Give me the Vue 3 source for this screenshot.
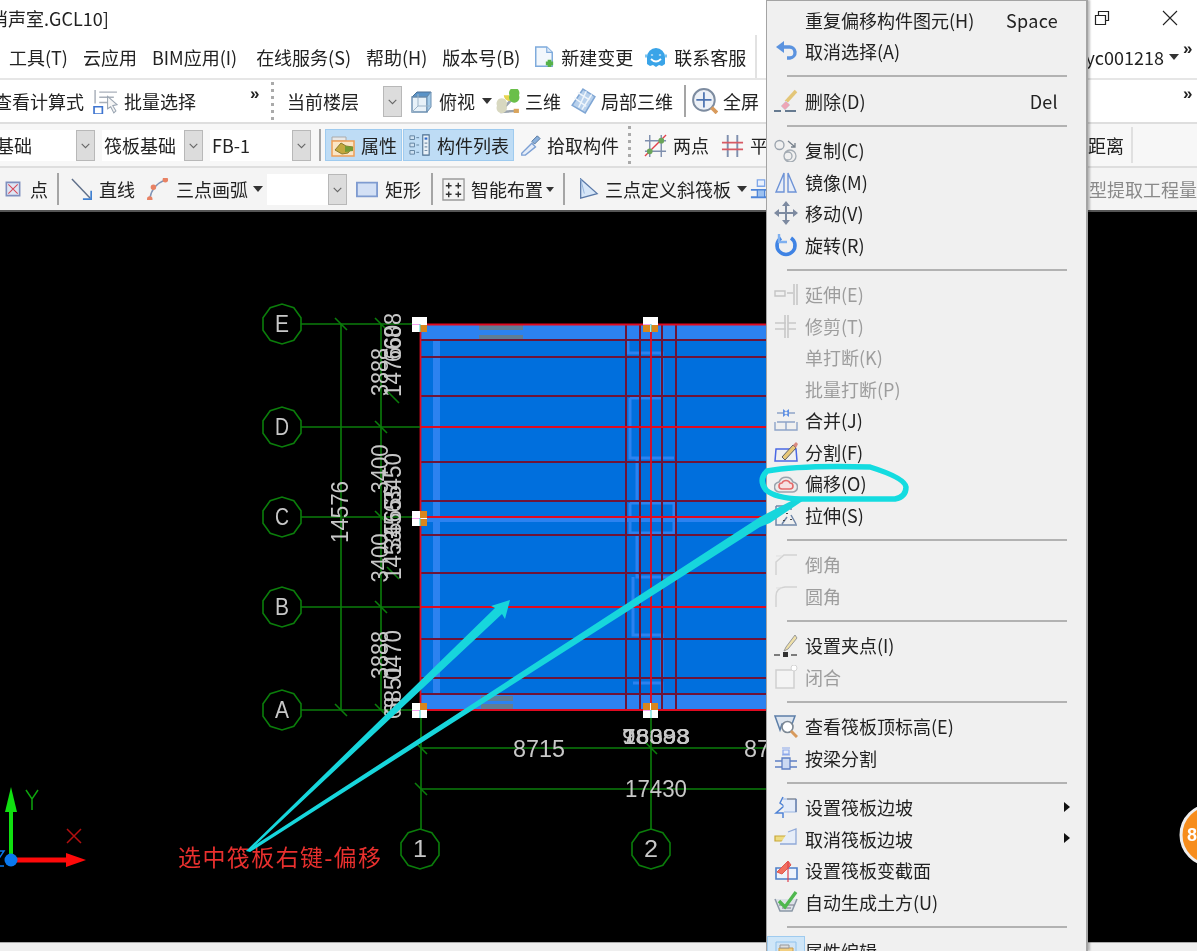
<template>
  <div class="screen">
    <!-- 标题栏 -->
    <div class="titlebar">
      <span class="title">消声室.GCL10]</span>
      <div class="winbtns">
        <svg width="16" height="16" viewBox="0 0 16 16"><path d="M1.5 5.5h10v9h-10zM4.5 5.5v-4h10v9h-3" fill="none" stroke="#222" stroke-width="1.2"/></svg>
        <svg class="ml52" width="16" height="16" viewBox="0 0 16 16"><path d="M1 1l14 14M15 1L1 15" stroke="#222" stroke-width="1.1"/></svg>
      </div>
    </div>

    <!-- 菜单行 -->
    <div class="row bar1">
      <div class="group menubar">
        <span>工具(T)</span><span>云应用</span><span>BIM应用(I)</span><span class="ml4">在线服务(S)</span><span>帮助(H)</span><span>版本号(B)</span>
        <span class="tool ml-2"><Ico n="newdoc" :w="22" :h="26" />新建变更</span>
        <span class="tool ml-4"><Ico n="smile" />联系客服</span>
      </div>
      <div class="group user">
        <span>yc001218</span><i class="caret ml5"></i><b class="more ml4 up">»</b>
      </div>
    </div>

    <div class="row bar2">
      <div class="group">
        <span class="ml-6">查看计算式</span>
        <span class="tool ml9"><Ico n="batch" :w="25" />批量选择</span>
        <b class="more ml54 up">»</b>
        <i class="grip ml7"></i>
        <div class="sel ml9 w119"><span>当前楼层</span><i class="btn"><Ico n="chev" :w="13" /></i></div>
        <span class="tool ml7"><Ico n="cube" />俯视</span>
        <i class="caret ml7"></i>
        <span class="tool ml4 g4"><Ico n="three" :w="25" />三维</span>
        <span class="tool ml9 g5"><Ico n="local" :w="26" />局部三维</span>
        <i class="vsep ml11"></i>
        <span class="tool ml6 g5"><Ico n="zoomall" :w="26" />全屏</span>
      </div>
      <div class="group"><b class="more up">»</b></div>
    </div>

    <div class="row bar3">
      <div class="group">
        <div class="sel ml-8 w103"><span>基础</span><i class="btn"><Ico n="chev" :w="13" /></i></div>
        <div class="sel ml7 w101 tight"><span>筏板基础</span><i class="btn"><Ico n="chev" :w="13" /></i></div>
        <div class="sel ml7 w101 tight"><span>FB-1</span><i class="btn"><Ico n="chev" :w="13" /></i></div>
        <i class="vsep ml8"></i>
        <span class="tool active ml4 a77"><Ico n="props" />属性</span>
        <span class="tool active ml1 a111"><Ico n="list" :w="22" />构件列表</span>
        <span class="tool ml5"><Ico n="dropper" :w="22" />拾取构件</span>
        <i class="grip ml9"></i>
        <span class="tool ml13"><Ico n="twopt" :w="23" />两点</span>
        <span class="tool ml12"><Ico n="para" :w="23" />平行</span>
      </div>
      <div class="group"><span class="dist">距离</span></div>
    </div>

    <div class="row bar4">
      <div class="group">
        <span class="tool ml5 g9"><Ico n="pointbox" :w="16" />点</span>
        <i class="vsep ml9"></i>
        <span class="tool ml12"><Ico n="line" :w="22" />直线</span>
        <span class="tool ml12 g7"><Ico n="arc" :w="22" />三点画弧</span>
        <i class="caret ml5"></i>
        <div class="sel ml4 w80"><span></span><i class="btn"><Ico n="chev" :w="13" /></i></div>
        <span class="tool ml9 g7"><Ico n="rect" :w="22" />矩形</span>
        <i class="vsep ml10"></i>
        <span class="tool ml9"><Ico n="smart" :w="23" />智能布置</span>
        <i class="caret small ml3"></i>
        <i class="vsep ml9"></i>
        <span class="tool ml12"><Ico n="slope" :w="22" />三点定义斜筏板</span>
        <i class="caret ml6"></i>
        <Ico class="ml3" n="beam" :w="22" />
      </div>
      <div class="group faded"><span>型提取工程量</span></div>
    </div>

    <!-- 绘图区 -->
    <div class="canvas">
      <svg class="cad" width="1197" height="730" viewBox="0 212 1197 730">
        <rect x="420" y="324" width="360" height="386" fill="#006fdd" />
        <!-- 边缘的浅色带 -->
        <g fill="#2c82f0">
          <rect x="421" y="325" width="359" height="15" />
          <rect x="421" y="695" width="359" height="15" />
          <rect x="433" y="340" width="7" height="355" />
          <rect x="421" y="517" width="359" height="5" />
        </g>
        <path d="M628 340V353H662V397M630 398H662M630 398V458H674M637 458V503M630 503H674V533H630V503M637 535V577H676M633 577V635H662V677M633 683H662V695" fill="none" stroke="#2c82f0" stroke-width="3" />
        <g fill="#5f7d96">
          <rect x="479" y="325" width="44" height="5" />
          <rect x="479" y="335" width="44" height="5" />
          <rect x="481" y="696" width="32" height="5" />
          <rect x="481" y="704" width="32" height="6" />
        </g>
        <g stroke="#6e1438" stroke-width="2">
          <path v-for="y in darkRows" :key="y" :d="`M421 ${y}H780`" />
          <path v-for="x in darkCols" :key="x" :d="`M${x} 325V710`" />
        </g>
        <g stroke="#e00a20" stroke-width="1.800" fill="none">
          <path d="M420.500 324.500H780M420.500 710H780M420.500 324V710M651 325V710" />
          <path d="M421 427H780M421 517H780M421 607H780" />
        </g>

        <!-- 轴网 -->
        <g stroke="#0b7d0b" stroke-width="1.6" fill="none">
          <path v-for="a in rowAxes" :key="a.t" :d="`M301 ${a.y}H420`" />
          <path d="M341 324V710M381 324V710M421 717V830M651 717V830M421 748H780M421 789H780" />
          <path v-for="t in ticks" :key="t.join()" :d="`M${t[0] - 6} ${t[1] - 6}l12 12`" />
          <polygon v-for="b in bubbles" :key="b.t" :points="b.points" />
        </g>
        <text v-for="b in bubbles" :key="b.t" class="cadtext" :x="b.x" :y="b.y + 8" font-size="23" text-anchor="middle" textLength="14" lengthAdjust="spacingAndGlyphs">{{ b.t }}</text>
        <text v-for="d in vertDims" :key="d.t + d.y" class="cadtext" :transform="`rotate(-90 ${d.x} ${d.y})`" :x="d.x" :y="d.y + 8" text-anchor="middle" font-size="23" :textLength="d.len" lengthAdjust="spacingAndGlyphs">{{ d.t }}</text>
        <text v-for="d in horizDims" :key="d.t + d.x" class="cadtext" :x="d.x" :y="d.y + 8" text-anchor="middle" :font-size="d.size" :textLength="d.len" lengthAdjust="spacingAndGlyphs">{{ d.t }}</text>

        <!-- 夹点 -->
        <g v-for="g in grips" :key="g.x + '-' + g.y" :transform="`translate(${g.x - 8} ${g.y - 7})`">
          <rect width="15" height="15" fill="#fff" />
          <rect v-for="(q, i) in g.orange" :key="i" :x="q[0]" :y="q[1]" :width="q[2]" :height="q[3]" fill="#d9861c" />
          <path d="M0 7.500H8" stroke="#f7a0f0" />
          <path d="M8 7V15" stroke="#45d8d0" />
        </g>

        <!-- 坐标系 -->
        <path d="M11 860V805" stroke="#10e010" stroke-width="4" />
        <path d="M11 787l-6 25h12z" fill="#10e010" />
        <path d="M11 860H66" stroke="#ff0a0a" stroke-width="5" />
        <path d="M86 860l-20-7v14z" fill="#ff0a0a" />
        <circle cx="11" cy="860" r="6.500" fill="#0a78ee" />
        <path d="M26 790l6 9 6-9M32 799v11" fill="none" stroke="#0ea50e" stroke-width="1.500" />
        <path d="M67 829l14 14M81 829l-14 14" stroke="#b21010" stroke-width="1.500" />
        <path d="M-6 851H4L-6 866H4" fill="none" stroke="#0a78ee" stroke-width="1.500" />

        <text class="note" x="178" y="866" textLength="203" lengthAdjust="spacing">选中筏板右键-偏移</text>

        <circle cx="1211" cy="835" r="30" fill="#f78d1c" stroke="#eee" stroke-width="3" />
        <text x="1187" y="841" fill="#fff" font-size="18" font-weight="700" font-family="Liberation Sans, sans-serif">8</text>
      </svg>
    </div>
    <div class="statusbar"></div>

    <!-- 右键菜单 -->
    <div class="ctx">
      <template v-for="(m, i) in menu" :key="i">
        <div v-if="m.sep" class="ctxsep"><i></i></div>
        <div v-else class="ctxitem" :class="{ off: m.off }">
          <span class="ctxicon" :class="{ on: m.on }"><Ico v-if="m.icon" :n="m.icon" /></span>
          <span class="ctxtext">{{ m.t }}</span>
          <span v-if="m.k" class="ctxkey">{{ m.k }}</span>
          <i v-if="m.sub" class="ctxsub"></i>
        </div>
      </template>
    </div>

    <!-- 手绘标注 -->
    <svg class="marks" width="1197" height="951" viewBox="0 0 1197 951">
      <path d="M246 851L495 608L491 606L510 600L505 619L502 614L249 851Z" fill="#17d6dc" />
      <path d="M246 851L760 517L793 500L804 500L770 523L760 527L250 852Z" fill="#17d6dc" />
      <path d="M767 471Q800 465 870 467Q905 478 906 487Q906 497 895 499L800 499Q775 498 766 490Q758 480 767 471Z" fill="none" stroke="#14dce0" stroke-width="5.500" />
    </svg>
  </div>
</template>

<script setup>
import { h } from 'vue'

// 每个图标: [d, stroke, fill, width]
const icons = {
  chev: [['M5 9l7 7 7-7', '#666', '', 2]],
  undo: [['M7 8h8a5.500 5.500 0 0 1 1 11h-3', '#5b93df', '', 3.4], ['M10 2L2 8l8 6z', '', '#5b93df']],
  brush: [['M22 2L12 13', '#e3c678', '', 3.5], ['M12 12l-5 5 4 4 5-5z', '#d8d0d8', '#eda6b6', 1], ['M0 22h7M11 22h11', '#667a90', '', 1.8]],
  copy: [['M10 7a4.500 4.500 0 1 1-9 0a4.500 4.500 0 1 1 9 0', '#9aa3ad', '', 1.3], ['M14 3l7 6M21 5v4h-4', '#77818c', '', 1.3], ['M22 18a6 6 0 1 1-12 0a6 6 0 1 1 12 0M18 18a4 4 0 1 1-8 0a4 4 0 1 1 8 0', '#a3abb3', '', 1.3]],
  mirror: [['M10 3L2 22h8zM14 3l8 19h-8z', '#6e93d6', '#e8eef8', 1.4]],
  move: [['M12 2v20M2 12h20', '#7d8aa0', '', 2], ['M12 0l-4 5h8zM12 24l-4-5h8zM0 12l5-4v8zM24 12l-5-4v8z', '', '#7d8aa0']],
  rotate: [['M7 5a9 9 0 1 0 10 0', '#3f83e4', '', 3.6], ['M5 1v8h8', '#7fb0ef', '', 2.4]],
  extend: [['M1 9h10v5H1zM13 11h6', '#c4c4c4', '', 1.4], ['M20 2v21M23 2v21', '#c4c4c4', '', 1.5]],
  trim: [['M1 9h11M1 15h11M14 9h8M14 15h8', '#c8c8c8', '', 1.6], ['M11 1v23M14 1v23', '#c8c8c8', '', 1.6]],
  merge: [['M3 5h7M21 5h-7M3 14h18M1 14v8h22v-8M12 14v8M1 22h22', '#8ea4c8', '', 1.4], ['M9 1l5 4-5 4zM15 1l-5 4 5 4z', '', '#5f90e4']],
  split: [['M2 9h20l1 12H1z', '#4a68e4', '', 1.5], ['M8 17L19 5l3 3-11 12z', '#5c6066', '#e8c878', 1], ['M19 5l3-3 2 2-2 4z', '', '#d88a80']],
  offset: [['M6 21a5 5 0 0 1-1-10 7.500 7.500 0 0 1 14 0 5 5 0 0 1-1 10z', '#9aa3ad', '#ececec', 1.6], ['M8 18a3 3 0 0 1 0-6 4.500 4.500 0 0 1 8 0 3 3 0 0 1 0 6z', '#e36a6a', '#f6e2e2', 1.6]],
  stretch: [['M2 3h15v4M2 3v19h21M17 12l5 9M8 21l5-7', '#6f86a8', '', 1.5], ['M13 10v1M17 16v1M10 17v1', '#444', '', 2]],
  chamfer: [['M2 23V10l8-7h13', '#d2d2d2', '', 1.5], ['M2 4h6', '#dfdfdf', '', 1]],
  fillet: [['M2 23V12q0-8 9-9h12', '#d2d2d2', '', 1.5], ['M2 4h6', '#dfdfdf', '', 1]],
  grip: [['M21 2L12 14l-2 4 4-2L23 5z', '#999', '#efe0a8', 1], ['M0 22h6M17 22h6', '#555', '', 1.6], ['M9 19h5v5H9z', '', '#333']],
  closed: [['M2 5h18v18H2z', '#cfcfcf', '#f4f4f4', 1.5], ['M23 3a3 3 0 1 1-6 0a3 3 0 1 1 6 0', '#d4d4d4', '#fff', 1]],
  viewtop: [['M1 2h20l-3 8H8l-2 6z', '#5c7ea8', '#dde5ef', 1.5], ['M19 13a5.500 5.500 0 1 1-11 0a5.500 5.500 0 1 1 11 0', '#7c8894', '#fff', 1.6], ['M17 17l6 6', '#d89a5c', '', 3]],
  beamsplit: [['M8 2h8M8 9h8M9 4h6v4H9z', '#8ca8ea', '#e6ecfa', 1.2], ['M1 15h22M1 21h22', '#5d7fc4', '', 1.5], ['M8 12h8v11H8z', '#5d7fc4', '#cbd9f2', 1.3]],
  slopeset: [['M9 2l-3 6 4 3-8 7h7v5', '#4f83d6', '', 1.5], ['M9 4h13v13H10', '#9ab6e4', '#e3ebf8', 1.2], ['M13 4h9v13', '#777', '', 1], ['M22 4v13', '#6488c8', '', 1]],
  slopeoff: [['M1 9h13v5H1z', '#c8a838', '#eedc82', 1.2], ['M14 5l8-3v15H6', '#90a9d8', '#e6edf8', 1.3]],
  section: [['M2 10h21v11H2z', '#4f7fc8', '#eef3fb', 1.6], ['M3 14L14 3l3 4L8 16z', '#e0564c', '#f0705f', 1], ['M14 4v20', '#e04050', '', 1.2]],
  soil: [['M1 9l5 12h12l5-12', '#8b98a6', '#dde2e8', 1.5], ['M5 15h15M8 18h9', '#778', '', 1.2], ['M5 11l6 6L22 2', '#4fb84f', '', 3.4]],
  propsbox: [['M2 3h20v20H2z', '#8fc2ec', '#cfe4f6', 1], ['M5 9h14v11H5z', '#c89a4c', '#f2cf80', 1], ['M6 6h9v3H6z', '#999', '#ddd', 1]],
  newdoc: [['M3 1h12l6 6v15H3z', '#7eaadc', '#f2f7fc', 1.6], ['M15 1v6h6', '#7eaadc', '#dce9f7', 1.2], ['M14 19h8M18 15v8', '#55b24a', '', 4]],
  smile: [['M3 12a9 9 0 1 1 18 0v7l-3 2-3-1-3 2-3-2-3 1-3-2z', '', '#3aa4e8'], ['M8 9.500v1M16 9.500v1', '#fff', '', 2.2], ['M7 14q5 5 10 0', '#fff', '', 1.8], ['M1 11h2M21 11h2', '#7cc4ef', '', 3]],
  batch: [['M2 1v13M6 3h17M6 8h14M6 13h8', '#a9b0ba', '', 1.4], ['M1 17h8v7H1z', '#3d74d0', '', 1.6], ['M14 7l9 8-4 1 3 5-2 2-3-6-3 2z', '#9aa5b2', '#f6f6f6', 1]],
  cube: [['M3 8l5-5h14l-4 5z', '#4a6f94', '#5a93c7', 1], ['M3 8h15v15H3z', '#6b8eb0', '#e8f1f8', 1.4], ['M18 8l4-5v15l-4 5z', '#6b8eb0', '#a4cbe9', 1], ['M3 23l6-6h13M9 17V5', '#9db4c8', '', 1]],
  three: [['M4 22L17 8M4 22l16-1', '#9aa3ad', '', 2.4], ['M18 6a5 5 0 1 1-10 0', '#e4d254', '#e8d64e', 1], ['M22 6a5 5 0 1 1-9 0a5 5 0 1 1 9 0', '', '#6abf4a'], ['M10 16a5 5 0 1 1-9 0a5 5 0 1 1 9 0', '', '#d8d8c0'], ['M22 19h-5v4h5z', '', '#d9a45c']],
  local: [['M12 1l11 7-9 15L2 16z', '#7fa6d4', '#b7d0ec', 1.4], ['M7 4l11 7M4 9l11 8M15 3l-7 15M20 6L11 20', '#eff5fb', '', 1.4]],
  zoomall: [['M21 11a10 10 0 1 1-20 0a10 10 0 1 1 20 0', '#7d8ca0', '#edf1f7', 1.8], ['M11 4v14M4 11h14', '#4d73b0', '', 1.6], ['M18 18l5 5', '#d89a5c', '', 3.5]],
  props: [['M1 4h14v4H1z', '#aaa', '#e8e8e8', 1], ['M1 8h22v15H1z', '#ef9f55', '#fbe5c4', 1.5], ['M4 17l6-7 5 3 7 1-5 6-6 1z', '#8a7c2e', '#c4a83e', 1], ['M14 13l8 1v4l-8 1z', '', '#749a34']],
  list: [['M1 2h5v4H1zM1 10h5v4H1zM1 18h5v4H1z', '#5f7f9c', '#cfe2f3', 1], ['M8 4h3M8 12h3M8 20h3', '#5f7f9c', '', 1], ['M15 1h7v22h-7z', '#4c6f90', '#e9f1f8', 1.2], ['M17 5h3', '#2e68c8', '', 2.4], ['M17 10h3M17 14h3M17 18h3', '#7a93ac', '', 1.2]],
  dropper: [['M3 21l11-11 4 4L7 23H3z', '#7da0d4', '#e5edf8', 1.5], ['M14 8l6-6 3 3-6 6z', '#4c6f98', '#8ab0dc', 1]],
  twopt: [['M6 1v23M18 1v23M1 7h22M1 18h22', '#7f8fae', '', 1.5], ['M1 23L23 1', '#e2404a', '', 1.4], ['M9 18a3 3 0 1 1-6 0a3 3 0 1 1 6 0M21 7a3 3 0 1 1-6 0a3 3 0 1 1 6 0', '', '#6aa55a']],
  para: [['M7 1v23M17 1v23', '#7f8fae', '', 2], ['M1 9h22M1 16h22', '#d75a64', '', 1.8]],
  pointbox: [['M2 2h20v20H2z', '#7f8fbe', '#dfe6f4', 2.4], ['M5 5l14 14M19 5L5 19', '#d84a5a', '', 1.6]],
  line: [['M1 1l20 21', '#60708a', '', 1.6], ['M22 14v9h-9', '#3f7fd0', '', 1.8]],
  arc: [['M3 23Q5 8 20 2', '#7f93b5', '', 1.6], ['M6 23a3 3 0 1 1-6 0a3 3 0 1 1 6 0M10 10a3 3 0 1 1-6 0a3 3 0 1 1 6 0M23 2a3 3 0 1 1-6 0a3 3 0 1 1 6 0', '', '#e88264']],
  rect: [['M1 5h22v15H1z', '#7f9bd0', '#d3e0f5', 2]],
  smart: [['M1 1h22v22H1z', '#9a9a9a', '#f4f4f4', 1.4], ['M7 5v6M4 8h6M17 5v6M14 8h6M7 14v6M4 17h6M17 14v6M14 17h6', '#333', '', 1.5]],
  slope: [['M4 1v21l18-5z', '#5a79a8', '#d6e6f8', 1.4], ['M4 1l4 16', '#93b4dc', '', 1]],
  beam: [['M8 2h8v7H8z', '#7da5e8', '#e9f0fc', 1.4], ['M1 13h22M1 21h22', '#4f85d8', '', 2], ['M8 13h8v8H8z', '#4f85d8', '#9dc1ef', 1.4]]
}

const Ico = (props) =>
  h('svg', { width: props.w || 24, height: props.h || props.w || 24, viewBox: '0 0 24 24', style: 'flex:none;display:block' },
    (icons[props.n] || []).map(([d, s, f, w]) => h('path', { d, stroke: s || 'none', fill: f || 'none', 'stroke-width': w || 1 })))
Ico.props = ['n', 'w', 'h']

const menu = [
  { t: '重复偏移构件图元(H)', k: 'Space' },
  { icon: 'undo', t: '取消选择(A)' },
  { sep: true },
  { icon: 'brush', t: '删除(D)', k: 'Del' },
  { sep: true },
  { icon: 'copy', t: '复制(C)' },
  { icon: 'mirror', t: '镜像(M)' },
  { icon: 'move', t: '移动(V)' },
  { icon: 'rotate', t: '旋转(R)' },
  { sep: true },
  { icon: 'extend', t: '延伸(E)', off: true },
  { icon: 'trim', t: '修剪(T)', off: true },
  { t: '单打断(K)', off: true },
  { t: '批量打断(P)', off: true },
  { icon: 'merge', t: '合并(J)' },
  { icon: 'split', t: '分割(F)' },
  { icon: 'offset', t: '偏移(O)' },
  { icon: 'stretch', t: '拉伸(S)' },
  { sep: true },
  { icon: 'chamfer', t: '倒角', off: true },
  { icon: 'fillet', t: '圆角', off: true },
  { sep: true },
  { icon: 'grip', t: '设置夹点(I)' },
  { icon: 'closed', t: '闭合', off: true },
  { sep: true },
  { icon: 'viewtop', t: '查看筏板顶标高(E)' },
  { icon: 'beamsplit', t: '按梁分割' },
  { sep: true },
  { icon: 'slopeset', t: '设置筏板边坡', sub: true },
  { icon: 'slopeoff', t: '取消筏板边坡', sub: true },
  { icon: 'section', t: '设置筏板变截面' },
  { icon: 'soil', t: '自动生成土方(U)' },
  { sep: true },
  { icon: 'propsbox', t: '属性编辑', on: true }
]

// 筏板上的钢筋线
const darkRows = [340, 357, 396, 462, 501, 535, 573, 639, 678, 694]
const darkCols = [626, 640, 662, 676]

const rowAxes = [
  { t: 'E', y: 324 },
  { t: 'D', y: 427 },
  { t: 'C', y: 517 },
  { t: 'B', y: 607 },
  { t: 'A', y: 710 }
]

function polygonAround(x, y, r) {
  const pts = []
  for (let i = 0; i < 10; i++) {
    const a = (Math.PI * 2 * i) / 10 + Math.PI / 10
    pts.push(`${(x + r * Math.cos(a)).toFixed(1)},${(y + r * Math.sin(a)).toFixed(1)}`)
  }
  return pts.join(' ')
}

const bubbles = [
  ...rowAxes.map((a) => ({ t: a.t, x: 282, y: a.y, points: polygonAround(282, a.y, 20) })),
  { t: '1', x: 420, y: 849, points: polygonAround(420, 849, 20) },
  { t: '2', x: 651, y: 849, points: polygonAround(651, 849, 20) }
]

const ticks = [
  [341, 324], [381, 324], [381, 427], [381, 517], [381, 607], [381, 710], [341, 710],
  [393, 397], [393, 573], [421, 748], [651, 748], [421, 789]
]

const vertDims = [
  { t: '14576', x: 340, y: 512, len: 62 },
  { t: '3888', x: 380, y: 372, len: 48 },
  { t: '3400', x: 380, y: 469, len: 49 },
  { t: '3400', x: 380, y: 558, len: 49 },
  { t: '3888', x: 380, y: 655, len: 48 },
  { t: '608', x: 393, y: 331, len: 36 },
  { t: '668', x: 393, y: 344, len: 36 },
  { t: '1476', x: 393, y: 372, len: 50 },
  { t: '3450', x: 393, y: 478, len: 50 },
  { t: '5655', x: 393, y: 510, len: 50 },
  { t: '3456', x: 393, y: 525, len: 50 },
  { t: '1453', x: 393, y: 555, len: 50 },
  { t: '0470', x: 393, y: 655, len: 50 },
  { t: '6851', x: 393, y: 690, len: 50 },
  { t: '68', x: 393, y: 708, len: 22 }
]

const horizDims = [
  { t: '8715', x: 539, y: 749, len: 52, size: 24 },
  { t: '8715', x: 770, y: 749, len: 52, size: 24 },
  { t: '98393', x: 656, y: 736, len: 68, size: 22 },
  { t: '78398', x: 656, y: 736, len: 68, size: 22 },
  { t: '16083', x: 656, y: 736, len: 66, size: 22 },
  { t: '17430', x: 656, y: 789, len: 62, size: 24 }
]

const grips = [
  { x: 420, y: 324, orange: [[8, 8, 7, 7]] },
  { x: 651, y: 324, orange: [[0, 8, 7, 7], [8, 8, 7, 7]] },
  { x: 420, y: 518, orange: [[8, 0, 7, 7], [8, 8, 7, 7]] },
  { x: 420, y: 710, orange: [[8, 0, 7, 7]] },
  { x: 651, y: 710, orange: [[0, 0, 7, 7], [8, 0, 7, 7]] }
]
</script>

<style scoped>
.screen {
  position: relative;
  width: 1197px;
  height: 951px;
  overflow: hidden;
  display: flex;
  flex-direction: column;
  background: #fff;
  color: #222;
  font-family: "Noto Sans CJK SC", "Noto Sans", sans-serif;
  font-size: 18px;
  filter: blur(0.45px);
}
.titlebar {
  height: 35px;
  flex: none;
  display: flex;
  align-items: center;
  justify-content: space-between;
  overflow: hidden;
}
.title { margin-left: -10px; }
.winbtns { display: flex; align-items: center; margin-right: 19px; }
.row {
  flex: none;
  height: 44px;
  display: flex;
  align-items: stretch;
  justify-content: space-between;
  overflow: hidden;
  white-space: nowrap;
}
.group { display: flex; align-items: center; flex: none; }
.bar1 { height: 45px; border-bottom: 2px solid #e6e6e6; box-sizing: border-box; }
.menubar {
  gap: 15px;
  padding-left: 9px;
  padding-right: 9px;
  border-right: 2px solid #e2e2e2;
}
.bar2 { border-bottom: 2px solid #dedede; box-sizing: border-box; }
.bar3 { background: #f7f7f7; border-bottom: 2px solid #dedede; box-sizing: border-box; }
.bar4 { background: #f4f4f4; border-bottom: 2px solid #555; box-sizing: border-box; }
.tool { display: flex; align-items: center; gap: 6px; flex: none; }
.g4 { gap: 4px; }
.g5 { gap: 5px; }
.g7 { gap: 7px; }
.g9 { gap: 9px; }
.active {
  height: 32px;
  box-sizing: border-box;
  background: #bedcf5;
  border: 1px solid #9fcbef;
  padding-left: 5px;
}
.a77 { width: 77px; }
.a111 { width: 111px; }
.more { font: 700 17px/1 "Liberation Sans", sans-serif; width: 14px; }
.up { align-self: flex-start; margin-top: 5px; }
.caret {
  flex: none;
  width: 0;
  height: 0;
  border-left: 5.5px solid transparent;
  border-right: 5.5px solid transparent;
  border-top: 6px solid #333;
}
.caret.small { border-left-width: 4px; border-right-width: 4px; border-top-width: 5px; }
.grip {
  flex: none;
  width: 3px;
  height: 38px;
  background: repeating-linear-gradient(#aaa 0 3px, transparent 3px 7px);
}
.vsep { flex: none; width: 2px; height: 32px; background: #a5a5a5; }
.sel {
  flex: none;
  height: 31px;
  box-sizing: border-box;
  display: flex;
  justify-content: space-between;
  align-items: center;
  background: #fff;
  padding-left: 4px;
}
.sel.tight { padding-left: 2px; }
.w119 { width: 119px; }
.w103 { width: 103px; }
.w101 { width: 101px; }
.w80 { width: 80px; }
.btn {
  flex: none;
  box-sizing: border-box;
  width: 19px;
  height: 31px;
  display: flex;
  align-items: center;
  justify-content: center;
  background: #dcdcdc;
  border: 1px solid #b8b8b8;
}
.dist {
  margin-right: 64px;
  padding: 0 7px 0 0;
  height: 36px;
  line-height: 36px;
  border-right: 2px solid #e0e0e0;
}
.faded { color: #8a8a8a; }
.user { padding-right: 0; }

.canvas { flex: 1; background: #000; overflow: hidden; }
.cad { display: block; }
.cadtext { fill: #c8c8c8; font-family: "Liberation Sans", sans-serif; }
.note { fill: #e8302e; font-family: "Liberation Serif", "Noto Sans CJK SC", serif; font-size: 23px; }
.statusbar { flex: none; height: 9px; background: #efefef; border-top: 1px solid #aaa; box-sizing: border-box; }

/* 右键菜单 */
.ctx {
  position: absolute;
  left: 766px;
  top: 0;
  width: 322px;
  height: 951px;
  box-sizing: border-box;
  padding-top: 3px;
  background: #f0f0f0;
  border: 1px solid #a4a4a4;
  border-bottom: none;
  border-right-width: 2px;
  box-shadow: 2px 0 2px rgba(0, 0, 0, 0.25);
  overflow: hidden;
}
.ctxitem {
  height: 31.5px;
  display: flex;
  align-items: center;
  position: relative;
}
.ctxicon {
  flex: none;
  width: 38px;
  height: 31px;
  display: flex;
  align-items: center;
  justify-content: center;
  box-sizing: border-box;
  padding-left: 0;
}
.ctxicon.on { background: #cfe6f8; border: 1px solid #9fcbef; }
.ctxtext { flex: 1; white-space: nowrap; }
.ctxkey { margin-right: 28px; letter-spacing: 0.3px; }
.ctxsub {
  position: absolute;
  right: 16px;
  top: 10px;
  width: 0;
  height: 0;
  border-top: 5.500px solid transparent;
  border-bottom: 5.500px solid transparent;
  border-left: 6px solid #111;
}
.off { color: #9d9d9d; }
.ctxsep { height: 18px; display: flex; align-items: center; }
.ctxsep i { display: block; margin-left: 20px; width: 280px; height: 2px; background: #b2b2b2; }

.marks { position: absolute; left: 0; top: 0; pointer-events: none; }

.ml1 { margin-left: 1px; }
.ml3 { margin-left: 3px; }
.ml4 { margin-left: 4px; }
.ml5 { margin-left: 5px; }
.ml6 { margin-left: 6px; }
.ml7 { margin-left: 7px; }
.ml8 { margin-left: 8px; }
.ml9 { margin-left: 9px; }
.ml10 { margin-left: 10px; }
.ml11 { margin-left: 11px; }
.ml12 { margin-left: 12px; }
.ml13 { margin-left: 13px; }
.ml52 { margin-left: 52px; }
.ml54 { margin-left: 54px; }
.ml-2 { margin-left: -2px; }
.ml-4 { margin-left: -4px; }
.ml-6 { margin-left: -6px; }
.ml-8 { margin-left: -8px; }
</style>
